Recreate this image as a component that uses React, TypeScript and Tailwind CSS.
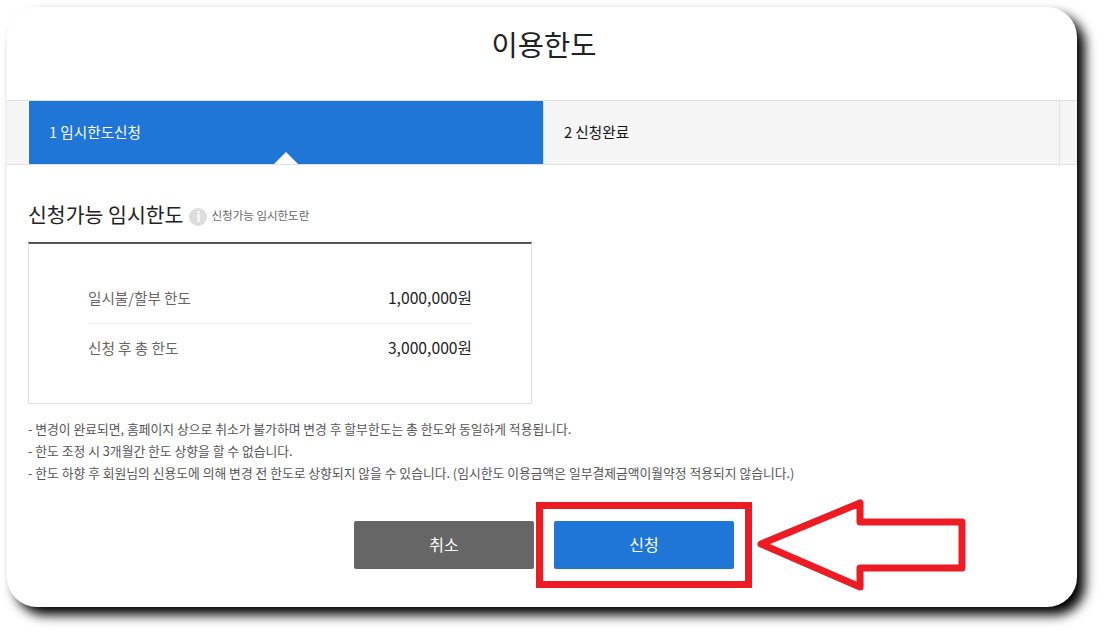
import React from "react";

function Row({ label, value, line }: { label: string; value: string; line?: boolean }) {
  return (
    <div className={`flex h-[50px] items-center justify-between pb-[2px] ${line ? "border-b border-[#eeeeee]" : ""}`}>
      <span className="text-[14.6px] text-[#666666]">{label}</span>
      <span className="text-[15.7px] text-[#222222]">{value}</span>
    </div>
  );
}

export default function App() {
  return (
    <div className="relative h-[636px] w-[1106px] overflow-hidden bg-white pl-[7px] pt-[7px] font-['Noto_Sans_CJK_KR','Noto_Sans',sans-serif]">
      <div className="flex h-[600px] w-[1070px] flex-col overflow-hidden rounded-[30px] bg-white shadow-[8px_8px_12px_rgba(0,0,0,1)]">
        <h1 className="flex h-[93px] shrink-0 items-center justify-center pb-[18px] pl-[4px] text-[28.5px] font-normal text-[#222222]">이용한도</h1>
        <div className="flex h-[65px] shrink-0 border-y border-[#e0e0e0] bg-[#f5f5f5] pl-[22px] pr-[17px]">
          <div className="relative flex w-[514px] items-center bg-[#1f76d7] pb-[1px] pl-[20px] text-[14.6px] text-white">
            1 임시한도신청
            <div className="absolute bottom-0 left-[245px] h-0 w-0 border-x-[12px] border-b-[12px] border-x-transparent border-b-white" />
          </div>
          <div className="flex flex-1 items-center border-x border-[#e0e0e0] pb-[1px] pl-[20px] text-[14.6px] text-[#111111]">2 신청완료</div>
        </div>

        <div className="flex flex-col pl-[21px] pr-[20px]">
          <div className="flex h-[77px] items-end pb-[15px]">
            <h2 className="text-[20.5px] leading-[26px] font-normal text-[#222222]">신청가능 임시한도</h2>
            <div className="mb-[1px] ml-[6px] flex h-[18px] w-[18px] items-center justify-center rounded-full bg-[#dddddd] text-[13px] font-bold text-white">i</div>
            <span className="mb-[3px] ml-[4px] text-[11.5px] text-[#666666]">신청가능 임시한도란</span>
          </div>
          <div className="box-border flex h-[162px] w-[504px] flex-col border border-t-2 border-[#e0e0e0] border-t-[#555555] px-[59px] pt-[30px]">
            <Row label="일시불/할부 한도" value="1,000,000원" line />
            <Row label="신청 후 총 한도" value="3,000,000원" />
          </div>
          <ul className="mt-[14px] text-[12.8px] leading-[22px] text-[#555555]">
            <li>- 변경이 완료되면, 홈페이지 상으로 취소가 불가하며 변경 후 할부한도는 총 한도와 동일하게 적용됩니다.</li>
            <li>- 한도 조정 시 3개월간 한도 상향을 할 수 없습니다.</li>
            <li>- 한도 하향 후 회원님의 신용도에 의해 변경 전 한도로 상향되지 않을 수 있습니다. (임시한도 이용금액은 일부결제금액이월약정 적용되지 않습니다.)</li>
          </ul>
          <div className="mt-[37px] flex gap-[20px] pl-[326px]">
            <button className="h-[48px] w-[180px] rounded-[2px] bg-[#666666] pb-[2px] text-[16px] text-white">취소</button>
            <button className="h-[48px] w-[180px] rounded-[2px] bg-[#1f76d7] pb-[2px] text-[16px] text-white">신청</button>
          </div>
        </div>
      </div>

      <div className="absolute left-[536px] top-[502px] h-[86px] w-[216px] border-[7px] border-[#ed1c24]" />
      <svg className="absolute left-[750px] top-[495px]" width="222" height="100" viewBox="750 495 222 100" fill="none">
        <path d="M761 544 L860 503 V522 H962 V568 H860 V587 Z" stroke="#ed1c24" strokeWidth="7" strokeLinejoin="round" />
      </svg>
    </div>
  );
}
